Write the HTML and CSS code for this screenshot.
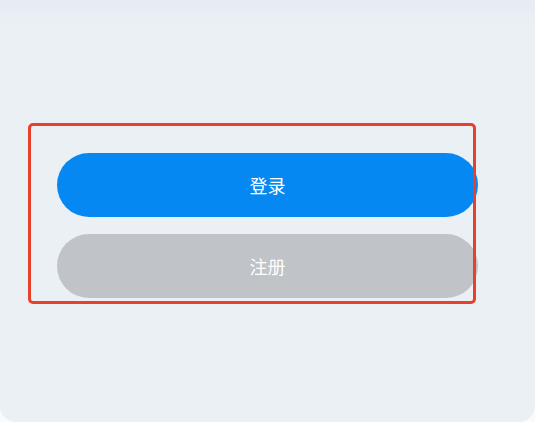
FILE: index.html
```html
<!DOCTYPE html>
<html lang="zh">
<head>
<meta charset="utf-8">
<link rel="stylesheet" href="styles.css">
</head>
<body>
<div class="screen">
  <div class="highlight">
    <div class="actions">
      <button class="btn btn-primary">登录</button>
      <button class="btn btn-secondary">注册</button>
    </div>
  </div>
</div>
</body>
</html>
```
FILE: styles.css
```css
html, body {
  margin: 0;
  padding: 0;
  background: #fafafa;
}
.screen {
  width: 535px;
  height: 422px;
  box-sizing: border-box;
  padding-top: 123px;
  padding-left: 28px;
  background: linear-gradient(to bottom, #e6ebf4 0px, #eaeff4 16px, #ebf0f4 30px, #ebf0f4 100%);
  border-radius: 0 0 16px 16px;
  overflow: hidden;
  font-family: "Noto Sans CJK SC", "Noto Sans", sans-serif;
}
.highlight {
  position: relative;
  width: 448px;
  box-sizing: border-box;
  padding: 30px 0 6px 29px;
}
.highlight::after {
  content: "";
  position: absolute;
  inset: 0;
  border: 3px solid #e8402a;
  border-radius: 5px;
  pointer-events: none;
}
.actions {
  display: flex;
  flex-direction: column;
  gap: 17px;
}
.btn {
  width: 421px;
  height: 64px;
  border: none;
  border-radius: 32px;
  color: #ffffff;
  font-family: "Noto Sans CJK SC", "Noto Sans", sans-serif;
  font-size: 18px;
  padding: 0;
  display: flex;
  align-items: center;
  justify-content: center;
}
.btn-primary {
  background: #0588f2;
}
.btn-secondary {
  background: #c0c3c8;
}
```
